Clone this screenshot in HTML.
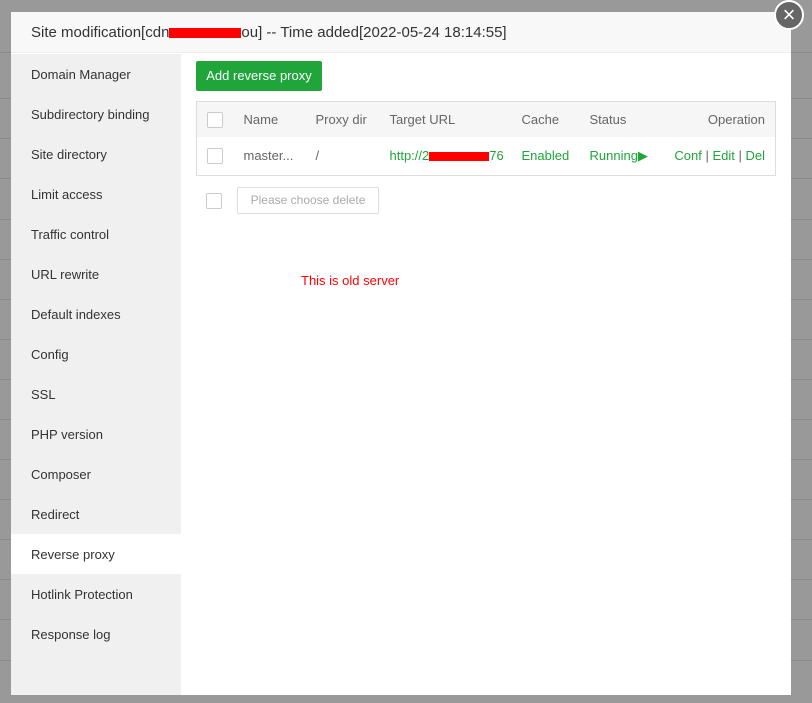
<!DOCTYPE html>
<html><head><style>
*{margin:0;padding:0;box-sizing:border-box}
body{width:812px;height:703px;overflow:hidden;background:#999;font-family:"Liberation Sans",sans-serif;position:relative}
.bgl{position:absolute;left:0;right:0;height:1px;background:#8a8a8a}
.modal{position:absolute;left:11px;top:12px;width:780px;height:683px;background:#fff}
.hd{height:41px;background:#f8f8f8;border-bottom:1px solid #eee;font-size:15px;color:#333;padding:12px 0 0 20px}
.side{position:absolute;left:0;top:42px;width:170px;bottom:0;background:#f0f0f0}
.side div{height:40px;line-height:41px;padding-left:20px;font-size:13px;color:#333}
.side .on{background:#fff}
.main{position:absolute;left:185px;top:49px}
.btn{position:absolute;left:0;top:0;width:126px;height:30px;background:#20a53a;color:#fff;border-radius:2px;font-size:13px;line-height:30px;text-align:center}
table{position:absolute;left:0;top:40px;width:580px;border:1px solid #ddd;border-collapse:collapse;font-size:13px;white-space:nowrap}
th{background:#f6f6f6;color:#666;font-weight:normal;height:35px;text-align:left}
td{height:39px;color:#666}
.cb{display:inline-block;width:16px;height:16px;border:1px solid #ccc;background:#fff;vertical-align:middle;border-radius:2px}
.g{color:#20a53a}
.close{position:absolute;left:774px;top:0px;width:30px;height:30px;border-radius:50%;background:#666;border:2px solid #fff;color:#fff;font-size:22px;line-height:25px;text-align:center}
</style></head><body>
<div class="bgl" style="top:52px"></div><div class="bgl" style="top:98px"></div><div class="bgl" style="top:138px"></div><div class="bgl" style="top:178px"></div><div class="bgl" style="top:219px"></div><div class="bgl" style="top:259px"></div><div class="bgl" style="top:299px"></div><div class="bgl" style="top:339px"></div><div class="bgl" style="top:379px"></div><div class="bgl" style="top:419px"></div><div class="bgl" style="top:459px"></div><div class="bgl" style="top:499px"></div><div class="bgl" style="top:539px"></div><div class="bgl" style="top:579px"></div><div class="bgl" style="top:619px"></div><div class="bgl" style="top:660px"></div>
<div class="modal">
<div class="hd">Site modification[cdn<span style="display:inline-block;width:72px;height:10px;background:#f00;vertical-align:middle"></span>ou] -- Time added[2022-05-24 18:14:55]</div>
<div class="side">
<div>Domain Manager</div><div>Subdirectory binding</div><div>Site directory</div><div>Limit access</div><div>Traffic control</div><div>URL rewrite</div><div>Default indexes</div><div>Config</div><div>SSL</div><div>PHP version</div><div>Composer</div><div>Redirect</div><div class="on">Reverse proxy</div><div>Hotlink Protection</div><div>Response log</div>
</div>
<div class="main">
<div class="btn">Add reverse proxy</div>
<table>
<tr><th style="width:47px;padding-left:10px"><span class="cb"></span></th><th style="width:72px">Name</th><th style="width:74px">Proxy dir</th><th style="width:132px">Target URL</th><th style="width:68px">Cache</th><th style="width:80px">Status</th><th style="text-align:right;padding-right:10px">Operation</th></tr>
<tr><td style="padding-left:10px"><span class="cb"></span></td><td>master...</td><td>/</td><td class="g">http://2<span style="display:inline-block;width:60px;height:9px;background:#f00;vertical-align:middle"></span>76</td><td class="g">Enabled</td><td class="g">Running&#9654;</td><td class="g" style="text-align:right;padding-right:10px">Conf <span style="color:#666">|</span> Edit <span style="color:#666">|</span> Del</td></tr>
</table>
<span class="cb" style="position:absolute;left:10px;top:132px"></span>
<div style="position:absolute;left:41px;top:126px;width:142px;height:27px;border:1px solid #ddd;border-radius:2px;color:#aaa;font-size:12px;line-height:25px;text-align:center;white-space:nowrap">Please choose delete</div>
<div style="position:absolute;left:105px;top:212px;color:#f00;font-size:13px;white-space:nowrap">This is old server</div>
</div>
</div>
<div class="close">&#215;</div>
</body></html>
